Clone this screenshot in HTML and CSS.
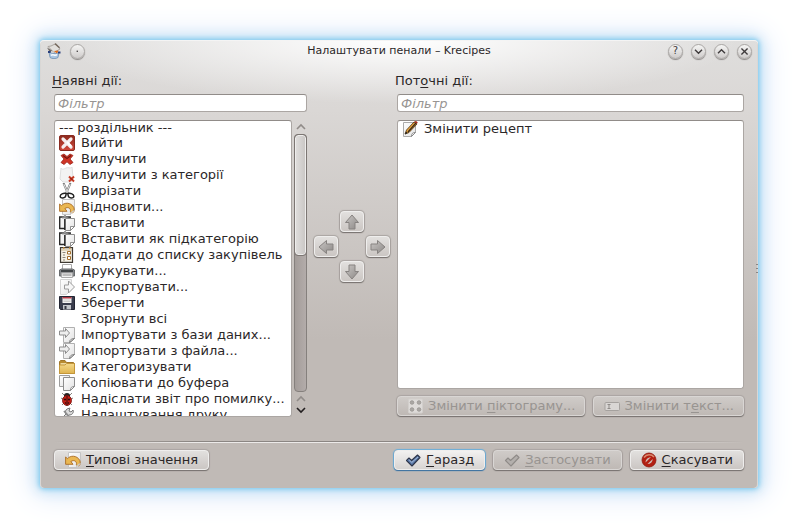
FILE: index.html
```html
<!DOCTYPE html>
<html lang="uk">
<head>
<meta charset="utf-8">
<title>Налаштувати пенали – Krecipes</title>
<link rel="stylesheet" href="styles.css">
</head>
<body>
<svg class="sprite" aria-hidden="true">
  <defs>
    <linearGradient id="g-red" x1="0" y1="0" x2="0" y2="1"><stop offset="0" stop-color="#8c2a1e"/><stop offset="1" stop-color="#d2473a"/></linearGradient>
    <linearGradient id="g-arrow" x1="0" y1="0" x2="1" y2="1"><stop offset="0" stop-color="#c9c6c4"/><stop offset="1" stop-color="#8d8987"/></linearGradient>
    <linearGradient id="g-paper" x1="0" y1="0" x2="1" y2="1"><stop offset="0" stop-color="#ffffff"/><stop offset="1" stop-color="#e2e2e2"/></linearGradient>
    <linearGradient id="g-folder" x1="0" y1="0" x2="0" y2="1"><stop offset="0" stop-color="#f5d98a"/><stop offset="1" stop-color="#dfb450"/></linearGradient>
  </defs>
  <symbol id="i-quit" viewBox="0 0 16 16"><rect x=".5" y=".5" width="15" height="15" rx="1.5" fill="url(#g-red)" stroke="#8a2a20"/><path d="M4 4l8 8M12 4l-8 8" stroke="#f6eeee" stroke-width="3.2" stroke-linecap="round"/><path d="M8 7l4 4" stroke="#fff" stroke-width="2"/></symbol>
  <symbol id="i-delete" viewBox="0 0 16 16"><path d="M2 4.500l3-1.500 3 2.500 3-2.500 3 1.500-3 3.500 3 3.500-3 2-3-2.700-3 2.700-3-2 3-3.500z" fill="#cf3426" stroke="#9a2318" stroke-width=".8"/><path d="M4 4.500l4 3 4-3" stroke="#76150e" stroke-width="1.200" fill="none"/></symbol>
  <symbol id="i-uncat" viewBox="0 0 16 16"><path d="M2 1c1 2 3 1 5 0s4 1 6-1l1 10-2 5H4L1 12z" fill="#f3f3f3" stroke="#dedede"/><path d="M10 9.500l5 5M15 9.500l-5 5" stroke="#c63a24" stroke-width="2"/><path d="M11.500 11l2 2" stroke="#7d1a10"/></symbol>
  <symbol id="i-cut" viewBox="0 0 16 16"><path d="M4.500 0l4.500 10.500M11.500 0L7 10.500" stroke="#777" stroke-width="2"/><path d="M4.800 1l4 9M11.200 1l-4 9" stroke="#eee" stroke-width=".9"/><path d="M7.200 10.500c-3-.5-6 .5-6 2.700 0 2.600 5.300 2.400 5.600-.7zM8.800 10.500c3-.5 6 .5 6 2.700 0 2.600-5.300 2.400-5.600-.7z" fill="#fff" stroke="#222" stroke-width="1.500"/></symbol>
  <symbol id="i-undo" viewBox="0 0 16 16"><path d="M3.500.5h12v11l-4 4h-8z" fill="url(#g-paper)" stroke="#c4c4c4"/><path d="M.6 5l1.900 1.700C5 3.300 12 3 14.800 8.500c.8 2 .4 4.500-.8 5.200-2 .4-2.600-.4-2.600-1 .7-3-2-5.400-5.500-3.200L8 12.300H.6z" fill="#eab752" stroke="#aa6b22" stroke-width=".9"/><path d="M11.500 15.500c.2-2 .8-3 4-4" fill="#fff" stroke="#bbb"/></symbol>
  <symbol id="i-paste" viewBox="0 0 16 16"><path d="M.7 2h10.500v11.500H.7z" fill="#f4f4f4" stroke="#292929" stroke-width="1.400"/><path d="M3 3V1.500h1.500L5.500.5h1l1 1H9V3z" fill="#999" stroke="#666" stroke-width=".6"/><path d="M6.500 3.500h9v8l-4 4h-5z" fill="url(#g-paper)" stroke="#8e8e8e"/><path d="M5.700 4v11" stroke="#222" stroke-width="1.200"/><path d="M11.500 15.500v-4h4z" fill="#fff" stroke="#777" stroke-width=".8"/></symbol>
  <symbol id="i-shop" viewBox="0 0 16 16"><path d="M1.500.7h12v14.600h-12z" fill="#f6f2e6" stroke="#3e3932" stroke-width="1.200"/><path d="M2 3h11" stroke="#c9b58e"/><path d="M8.500 4.500h3v2.500h-3zM8.500 9.500h3v3h-3z" fill="#fff" stroke="#a36e2d"/><path d="M3.500 5.500h3M3.500 10.500h3M4 8h2M4 13h2" stroke="#8c8577"/><path d="M4 1h1.500M10 1h1.500" stroke="#d28e30" stroke-width="1.500"/></symbol>
  <symbol id="i-print" viewBox="0 0 16 16"><path d="M3.500 1.500h9v6h-9z" fill="#fff" stroke="#aaa"/><path d="M.5 7l2-1h11l2 1v6H.5z" fill="#85888b" stroke="#686b6d"/><path d="M2 8h12" stroke="#2d3032" stroke-width="1.500"/><path d="M2.500 10h11v4.500h-11z" fill="#f2f2f2" stroke="#aaa"/><path d="M3.500 12h9" stroke="#888"/></symbol>
  <symbol id="i-export" viewBox="0 0 16 16"><path d="M1.500.5h11v10l-5 5h-6z" fill="url(#g-paper)" stroke="#d4d4d4"/><path d="M5.500 6h4V2l6 6-6 6v-4h-4z" fill="#f6f6f6" stroke="#9b9b9b"/></symbol>
  <symbol id="i-save" viewBox="0 0 16 16"><path d="M.5 1.500h15v13H1.500l-1-1z" fill="#3a3d4d" stroke="#232532"/><path d="M3.500 2h9v6h-9z" fill="#f3f3f3"/><path d="M3.500 2h9v1.500h-9z" fill="#b33844"/><path d="M4.500 5h7M4.500 6.500h7" stroke="#bbb" stroke-width=".7"/><path d="M4 10h8v4.500H4z" fill="#c3c6cc"/><path d="M5.500 11h2v3h-2z" fill="#343743"/></symbol>
  <symbol id="i-import" viewBox="0 0 16 16"><path d="M4.500.5h11v11l-4 4h-7z" fill="url(#g-paper)" stroke="#b0b0b0"/><path d="M10.500 15.500c.3-2.500 1-3.500 5-4z" fill="#fff" stroke="#777"/><path d="M.5 4h6V1.500l4 4.500-4 4.500V8h-6z" fill="#eee" stroke="#8d8d8d"/></symbol>
  <symbol id="i-folder" viewBox="0 0 16 16"><path d="M.5 14.500v-12l1-1H6l1.500 2h7l1 1v10z" fill="#b88b31" stroke="#a0762a"/><path d="M1.500 5h13" stroke="#fff3c8" stroke-width="1.500"/><path d="M.5 14.500v-8.500H6l1.500-1.500h8v10z" fill="url(#g-folder)" stroke="#c3963a"/></symbol>
  <symbol id="i-copy" viewBox="0 0 16 16"><path d="M.5.5h10v11H.5z" fill="url(#g-paper)" stroke="#9d9d9d"/><path d="M4.500 2.500h11v9l-4 4h-7z" fill="url(#g-paper)" stroke="#8e8e8e"/><path d="M11.500 15.500c0-3 1-4 4-4z" fill="#fff" stroke="#888"/></symbol>
  <symbol id="i-bug" viewBox="0 0 16 16"><path d="M3 2l3 3M13 2l-3 3M2 7l4 2M14 7l-4 2M3 14l3-3M13 14l-3-3" stroke="#8a8580"/><ellipse cx="8" cy="4.500" rx="3" ry="2.500" fill="#252323"/><ellipse cx="8" cy="9.500" rx="4.500" ry="5" fill="#c61f16" stroke="#76110d" stroke-width=".8"/><path d="M8 5v9.500" stroke="#3b100e"/><circle cx="6" cy="8.500" r="1" fill="#2b0c0a"/><circle cx="10" cy="8.500" r="1" fill="#2b0c0a"/><circle cx="6.500" cy="12" r=".8" fill="#2b0c0a"/><circle cx="9.500" cy="12" r=".8" fill="#2b0c0a"/></symbol>
  <symbol id="i-tools" viewBox="0 0 16 16"><path d="M8 2l3-1-1 3 2 1 2-2c1 3-1 5-4 5l-7 7-2-2 6-6c-1-2-.5-4 1-5z" fill="#ddd" stroke="#777"/><path d="M5 4l9 10" stroke="#8c8c8c" stroke-width="1.800"/></symbol>
  <symbol id="i-edit" viewBox="0 0 16 16"><path d="M1.500 1.500h12v10l-4 4h-8z" fill="url(#g-paper)" stroke="#aaa"/><path d="M9.500 15.500c.2-3 1-4 4-4z" fill="#fff" stroke="#888"/><path d="M3 13l1.500-4L12 1l3 2-8 8.500z" fill="#e4a13a" stroke="#4f3413" stroke-width=".8"/><path d="M6 11l8-9" stroke="#3a2a1a" stroke-width="1.200"/><path d="M12 .8l3 2 .7-1.500L14 0z" fill="#a42516"/><path d="M3 13.500l1-3 1.700 1.500z" fill="#222"/></symbol>
  <symbol id="i-app" viewBox="0 0 16 16"><path d="M2 3.500l3-.5L10 .5 14 6 8 9.500z" fill="#e2e0dd" stroke="#9c9690" stroke-width=".8"/><path d="M9 .8l4.500 4" stroke="#74675c" stroke-width="1.500"/><path d="M1 4.500l5 3-2 2z" fill="#6d6764"/><path d="M3 9c3 2 7 2 10 .5L12 14.500c-2 1.500-6 1.500-8 0z" fill="#a9c5e2" stroke="#6487ad" stroke-width=".7"/><path d="M8 8l3 2.500 1.500-3z" fill="#e06d1d"/><path d="M2 8h2.500v2H2zM12 8.500h2.500v2H12z" fill="#283e7c"/><path d="M5 12.500c2-2 4 1 6-1" stroke="#f7fbff" stroke-width="1.500" fill="none"/></symbol>
  <symbol id="i-up" viewBox="0 0 16 16"><path d="M8 1l6.500 7.500H11V15H5V8.500H1.500z" fill="url(#g-arrow)" stroke="#878381" stroke-linejoin="round"/></symbol>
  <symbol id="i-down" viewBox="0 0 16 16"><path d="M8 15L1.500 7.500H5V1h6v6.500h3.500z" fill="url(#g-arrow)" stroke="#878381" stroke-linejoin="round"/></symbol>
  <symbol id="i-left" viewBox="0 0 16 16"><path d="M1 8l7.500-6.500V5H15v6H8.500v3.500z" fill="url(#g-arrow)" stroke="#878381" stroke-linejoin="round"/></symbol>
  <symbol id="i-right" viewBox="0 0 16 16"><path d="M15 8L7.500 1.500V5H1v6h6.500v3.500z" fill="url(#g-arrow)" stroke="#878381" stroke-linejoin="round"/></symbol>
  <symbol id="i-grid" viewBox="0 0 16 16"><rect x="1.500" y="1" width="14" height="14" rx="1" fill="#dedbd9" stroke="#d2cfcc"/><g fill="#aaa7a4" stroke="#989491" stroke-width=".8"><circle cx="5" cy="4.500" r="1.800"/><circle cx="12" cy="4.500" r="1.800"/><circle cx="5" cy="11.500" r="1.800"/><circle cx="12" cy="11.500" r="1.800"/></g></symbol>
  <symbol id="i-text" viewBox="0 0 16 16"><rect x="1" y="4.500" width="14.500" height="8" rx="1" fill="#d9d6d4" stroke="#a5a19e"/><path d="M3.500 6.500h3M5 6.500v4M3.500 10.500h3" stroke="#8f8b88" fill="none"/></symbol>
  <symbol id="i-ok" viewBox="0 0 16 16"><path d="M1.500 8.500L4 6l2.500 2.500L12.500 3 15 5.500 7 14z" fill="#5c7bab" stroke="#2d3448" stroke-width="1.100" stroke-linejoin="round"/><path d="M4 7.500l2.700 3L13 5" stroke="#a8bbd6" stroke-width="1" fill="none"/></symbol>
  <symbol id="i-apply" viewBox="0 0 16 16"><path d="M1.500 8.500L4 6l2.500 2.500L12.500 3 15 5.500 7 14z" fill="#b3afac" stroke="#8f8b88" stroke-width="1.100" stroke-linejoin="round"/></symbol>
  <symbol id="i-cancel" viewBox="0 0 16 16"><circle cx="8" cy="8" r="7" fill="#b31f12" stroke="#8e1a10" stroke-width=".8"/><path d="M3 5.500c2.500-3.500 7.500-3.500 10-.5" stroke="#d98a6f" stroke-width="1.500" fill="none"/><path d="M4.500 10.500c0-3 2-5 5.500-5.500z" fill="#cfc3bd"/><path d="M6.500 12c3 0 5-2 5.300-5z" fill="#cfc3bd"/></symbol>
  <symbol id="i-chev-up" viewBox="0 0 10 8"><path d="M1 6l4-4 4 4" fill="none" stroke="currentColor" stroke-width="1.600"/></symbol>
  <symbol id="i-chev-down" viewBox="0 0 10 8"><path d="M1 2l4 4 4-4" fill="none" stroke="currentColor" stroke-width="1.600"/></symbol>
  <symbol id="i-x" viewBox="0 0 10 8"><path d="M1.500 .5l7 7M8.500 .5l-7 7" fill="none" stroke="currentColor" stroke-width="1.500"/></symbol>
  <symbol id="i-dot" viewBox="0 0 10 8"><rect x="4" y="3" width="1.500" height="1.500" fill="currentColor"/></symbol>
</svg>

<main class="window">
  <header class="titlebar">
    <div class="title-group">
      <svg class="icon"><use href="#i-app"/></svg>
      <button class="round" type="button" aria-label="На всі стільниці"><svg><use href="#i-dot"/></svg></button>
    </div>
    <h1 class="title">Налаштувати пенали – Krecipes</h1>
    <div class="title-group title-group-end">
      <button class="round" type="button">?</button>
      <button class="round" type="button" aria-label="Мінімізувати"><svg><use href="#i-chev-down"/></svg></button>
      <button class="round" type="button" aria-label="Максимізувати"><svg><use href="#i-chev-up"/></svg></button>
      <button class="round" type="button" aria-label="Закрити"><svg><use href="#i-x"/></svg></button>
    </div>
  </header>

  <div class="panes">
    <section class="pane">
      <label class="field-label" for="filter-available"><u>Н</u>аявні дії:</label>
      <input class="filter" id="filter-available" type="text" placeholder="Фільтр">
      <div class="list-area">
        <ul class="list">
          <li class="item separator-item">--- роздільник ---</li>
          <li class="item"><svg class="icon"><use href="#i-quit"/></svg>Вийти</li>
          <li class="item"><svg class="icon"><use href="#i-delete"/></svg>Вилучити</li>
          <li class="item"><svg class="icon"><use href="#i-uncat"/></svg>Вилучити з категорії</li>
          <li class="item"><svg class="icon"><use href="#i-cut"/></svg>Вирізати</li>
          <li class="item"><svg class="icon"><use href="#i-undo"/></svg>Відновити...</li>
          <li class="item"><svg class="icon"><use href="#i-paste"/></svg>Вставити</li>
          <li class="item"><svg class="icon"><use href="#i-paste"/></svg>Вставити як підкатегорію</li>
          <li class="item"><svg class="icon"><use href="#i-shop"/></svg>Додати до списку закупівель</li>
          <li class="item"><svg class="icon"><use href="#i-print"/></svg>Друкувати...</li>
          <li class="item"><svg class="icon"><use href="#i-export"/></svg>Експортувати...</li>
          <li class="item"><svg class="icon"><use href="#i-save"/></svg>Зберегти</li>
          <li class="item"><svg class="icon"></svg>Згорнути всі</li>
          <li class="item"><svg class="icon"><use href="#i-import"/></svg>Імпортувати з бази даних...</li>
          <li class="item"><svg class="icon"><use href="#i-import"/></svg>Імпортувати з файла...</li>
          <li class="item"><svg class="icon"><use href="#i-folder"/></svg>Категоризувати</li>
          <li class="item"><svg class="icon"><use href="#i-copy"/></svg>Копіювати до буфера</li>
          <li class="item"><svg class="icon"><use href="#i-bug"/></svg>Надіслати звіт про помилку...</li>
          <li class="item"><svg class="icon"><use href="#i-tools"/></svg>Налаштування друку</li>
        </ul>
        <div class="scrollbar">
          <svg class="chev"><use href="#i-chev-up"/></svg>
          <div class="track"><div class="thumb"></div></div>
          <svg class="chev"><use href="#i-chev-up"/></svg>
          <svg class="chev chev-dark"><use href="#i-chev-down"/></svg>
        </div>
      </div>
    </section>

    <div class="movers">
      <button class="mover mover-up" type="button" aria-label="Вгору" disabled><svg class="icon"><use href="#i-up"/></svg></button>
      <button class="mover mover-left" type="button" aria-label="Ліворуч" disabled><svg class="icon"><use href="#i-left"/></svg></button>
      <button class="mover mover-right" type="button" aria-label="Праворуч" disabled><svg class="icon"><use href="#i-right"/></svg></button>
      <button class="mover mover-down" type="button" aria-label="Вниз" disabled><svg class="icon"><use href="#i-down"/></svg></button>
    </div>

    <section class="pane">
      <label class="field-label" for="filter-current">Пот<u>о</u>чні дії:</label>
      <input class="filter" id="filter-current" type="text" placeholder="Фільтр">
      <ul class="list list-current">
        <li class="item"><svg class="icon"><use href="#i-edit"/></svg>Змінити рецепт</li>
      </ul>
      <div class="edit-row">
        <button class="btn" type="button" disabled><svg class="icon"><use href="#i-grid"/></svg><span>Змінити <u>п</u>іктограму...</span></button>
        <button class="btn" type="button" disabled><svg class="icon"><use href="#i-text"/></svg><span>Змінити т<u>е</u>кст...</span></button>
      </div>
    </section>
  </div>

  <hr class="divider">

  <footer class="footer">
    <button class="btn btn-defaults" type="button"><svg class="icon"><use href="#i-undo"/></svg><span><u>Т</u>ипові значення</span></button>
    <button class="btn btn-primary" type="button"><svg class="icon"><use href="#i-ok"/></svg><span><u>Г</u>аразд</span></button>
    <button class="btn" type="button" disabled><svg class="icon"><use href="#i-apply"/></svg><span><u>З</u>астосувати</span></button>
    <button class="btn" type="button"><svg class="icon"><use href="#i-cancel"/></svg><span><u>С</u>касувати</span></button>
  </footer>
  <span class="grip"></span>
</main>
</body>
</html>
```
FILE: styles.css
```css
* {
  box-sizing: border-box;
}

body {
  margin: 0;
  padding: 40px;
  background: #fff;
  color: #2b2728;
  font: 13px/16px "DejaVu Sans", sans-serif;
}

button,
input {
  font: inherit;
  color: inherit;
}

u {
  text-decoration-thickness: 1px;
  text-underline-offset: 2px;
}

.sprite {
  position: absolute;
  width: 0;
  height: 0;
}

.icon {
  flex: none;
  width: 16px;
  height: 16px;
}

.window {
  position: relative;
  display: flex;
  flex-direction: column;
  height: calc(100vh - 80px);
  min-height: 360px;
  padding: 0 14px 18px;
  border-radius: 4px;
  background:
    radial-gradient(ellipse 340px 64px at 50% 0, #fff, rgba(255, 255, 255, 0)),
    linear-gradient(#dfdedd, #dad7d5 70px, #c0bab6 300px);
  box-shadow:
    inset 0 1px #f4f4f4,
    inset 1px 0 #d9d7d5,
    inset -1px 0 #d9d7d5,
    0 0 5px 1px #79c8ed,
    0 0 14px 3px #bcdff5,
    0 1px 30px 7px #dfe9f9;
}

.titlebar {
  display: grid;
  grid-template-columns: 1fr auto 1fr;
  align-items: center;
  height: 22px;
  margin: 0 -8px;
}

.title {
  margin: 0;
  font-size: 11px;
  font-weight: normal;
}

.title-group {
  display: flex;
  align-items: center;
  gap: 8px;
}

.title-group-end {
  justify-content: flex-end;
}

.round {
  display: grid;
  place-items: center;
  width: 15px;
  height: 15px;
  padding: 0;
  border: 1px solid #aaa7a5;
  border-radius: 50%;
  background: linear-gradient(#f5f5f4, #cfcccb);
  box-shadow: 0 1px 1px #8b8785;
  color: #3e3a3b;
  font-size: 10px;
  line-height: 12px;
}

.round svg {
  width: 9px;
  height: 7px;
}

.panes {
  flex: 1;
  display: grid;
  grid-template-columns: 253fr 90px 347fr;
  min-height: 0;
  padding-top: 10px;
}

.pane {
  display: flex;
  flex-direction: column;
  min-width: 0;
  min-height: 0;
}

.field-label {
  height: 18px;
  margin: 0 0 4px -2px;
  line-height: 18px;
}

.filter {
  width: 100%;
  height: 18px;
  padding: 0 3px;
  border: 1px solid #aba6a3;
  border-top-color: #918c89;
  border-radius: 3px;
  background: #fff;
}

.filter::placeholder {
  color: #989593;
  font-style: italic;
  opacity: 1;
}

.list-area {
  flex: 1;
  display: flex;
  gap: 2px;
  min-height: 0;
  margin-top: 8px;
}

.list {
  flex: 1;
  min-width: 0;
  min-height: 0;
  margin: 0;
  padding: 0 4px;
  overflow: hidden;
  border: 1px solid #aba6a3;
  border-top-color: #918c89;
  border-radius: 3px;
  background: #fff;
  list-style: none;
}

.list-current {
  margin: 8px 0 7px;
}

.item {
  display: flex;
  align-items: center;
  gap: 6px;
  height: 16px;
  white-space: nowrap;
}

.separator-item {
  height: 14px;
}

.scrollbar {
  display: flex;
  flex-direction: column;
  align-items: center;
  gap: 3px;
  width: 13px;
  padding: 3px 0;
  color: #918c89;
}

.chev {
  width: 10px;
  height: 8px;
}

.chev-dark {
  color: #231f20;
}

.track {
  flex: 1;
  width: 13px;
  border: 1px solid #85807d;
  border-radius: 4px;
  background: linear-gradient(90deg, #a39c99, #b3acaa);
}

.thumb {
  height: 47%;
  border: 1px solid #eeedec;
  border-radius: 3px;
  outline: 1px solid #7c7673;
  background: linear-gradient(90deg, #dedcdb, #cbc8c6);
}

.movers {
  display: grid;
  grid-template-columns: repeat(3, 24px);
  grid-auto-rows: 21px;
  align-content: center;
  justify-content: center;
  gap: 4px 2px;
  padding-top: 4px;
}

.mover-up,
.mover-down {
  grid-column: 2;
}

.mover-left {
  grid-column: 1;
}

.mover-right {
  grid-column: 3;
}

.mover,
.btn {
  display: flex;
  align-items: center;
  justify-content: center;
  border: 1px solid #efeeed;
  border-radius: 4px;
  background: linear-gradient(#e2e0de, #cbc6c3);
  box-shadow: 0 1px 1px #77726f, 0 0 1px 1px #aaa5a2;
}

.mover {
  padding: 0;
}

.btn {
  gap: 5px;
  height: 20px;
  padding: 0 10px;
  white-space: nowrap;
}

.btn:disabled {
  border-color: #d9d6d4;
  background: linear-gradient(#cfcbc8, #bfb9b5);
  color: #989491;
}

.btn-primary {
  background: linear-gradient(#f2f1f0, #d7d4d2);
  box-shadow: 0 1px 1px #3f6f9c, 0 0 1px 1px #6aaeda;
}

.edit-row {
  display: flex;
  gap: 8px;
  margin-bottom: 1px;
}

.edit-row .btn {
  flex: 1 1 auto;
  padding: 0 8px;
}

.divider {
  width: 100%;
  height: 2px;
  margin: 24px 0 7px;
  border: 0;
  background:
    linear-gradient(90deg, transparent, #8b8683 20%, #8b8683 80%, transparent) top / 100% 1px no-repeat,
    linear-gradient(90deg, transparent, #eceae9 20%, #eceae9 80%, transparent) bottom / 100% 1px no-repeat;
}

.footer {
  display: flex;
  gap: 8px;
}

.btn-defaults {
  margin-right: auto;
}

.grip {
  position: absolute;
  top: 50%;
  right: 0;
  width: 2px;
  height: 9px;
  background: repeating-linear-gradient(#8b8683 0 1px, transparent 1px 4px);
}
```
